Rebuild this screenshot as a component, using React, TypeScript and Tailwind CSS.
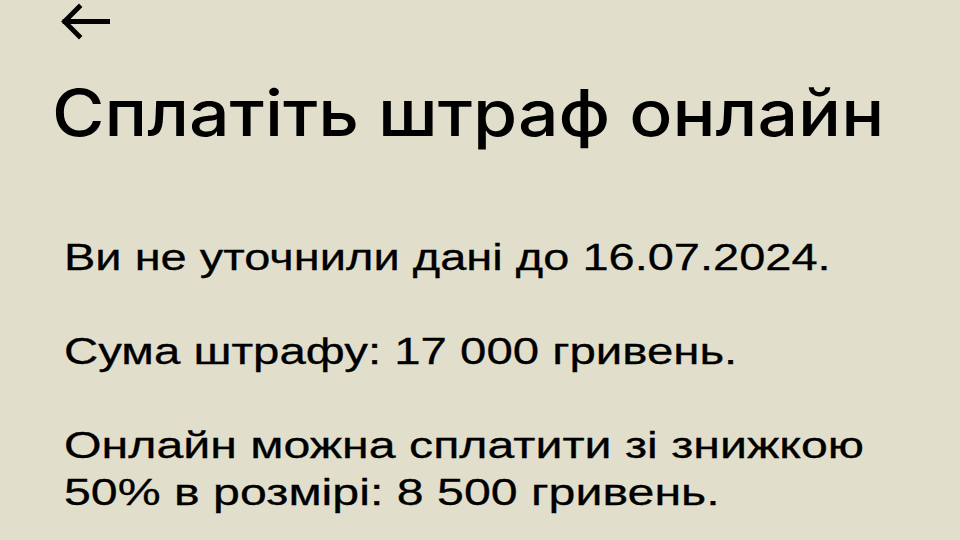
import React from "react";

export default function App() {
  return (
    <div className="w-[960px] h-[540px] overflow-hidden bg-[#e1dfcc] text-black flex flex-col">
      <div className="pl-[60px] pt-[3px] h-[40px]">
        <svg width="50" height="38" viewBox="0 0 50 38" fill="none">
          <path d="M48 18.5H5M19 4L4.5 18.5L19 33" stroke="#000" strokeWidth="4.8" strokeLinecap="square" />
        </svg>
      </div>
      <h1 className="pl-[52px] mt-[37px] text-[64px] leading-[72px] font-['Inter',sans-serif] font-medium">
        <span className="inline-block origin-left scale-x-[1.118] whitespace-nowrap">Сплатіть штраф онлайн</span>
      </h1>
      <div className="pl-[64px] mt-[85px] flex flex-col gap-[47px] font-['Liberation_Sans',sans-serif] text-[37px] leading-[47px] [-webkit-text-stroke:0.3px_black]">
        <p className="origin-left scale-x-[1.27] whitespace-nowrap">Ви не уточнили дані до 16.07.2024.</p>
        <p className="origin-left scale-x-[1.28] whitespace-nowrap">Сума штрафу: 17 000 гривень.</p>
        <p className="origin-left scale-x-[1.305] whitespace-nowrap">
          Онлайн можна сплатити зі знижкою
          <br />
          50% в розмірі: 8 500 гривень.
        </p>
      </div>
    </div>
  );
}
